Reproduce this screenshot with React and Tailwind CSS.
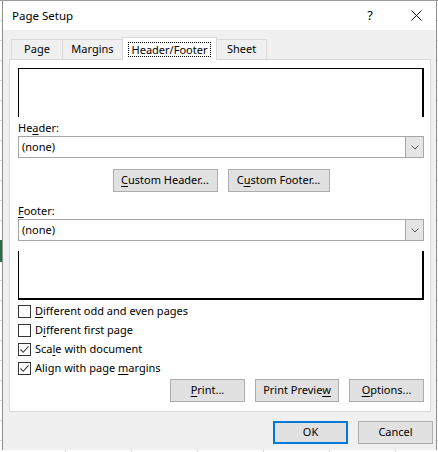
import React from 'react';

const Btn = ({ w, children, primary }) => (
  <div
    className={`h-[23px] flex items-center justify-center bg-[#e1e1e1] ${w} ${
      primary ? 'border-2 border-[#0078d7]' : 'border border-[#adadad]'
    }`}
  >
    {children}
  </div>
);

const U = ({ children }) => <span className="underline underline-offset-[2px] decoration-1">{children}</span>;

const Select = () => (
  <div className="h-[22px] flex border border-[#a6a6a6] bg-white">
    <div className="flex-1 flex items-center pl-[3px]">(none)</div>
    <div className="w-[18px] flex items-center justify-center bg-[#e5e5e5] border-l border-[#a6a6a6]">
      <svg width="8" height="5" viewBox="0 0 8 5" fill="none">
        <path d="M0.5 0.5 L4 4 L7.5 0.5" stroke="#555" strokeWidth="1" />
      </svg>
    </div>
  </div>
);

const Check = ({ checked, children }) => (
  <div className="h-[19px] flex items-center">
    <div className="w-[13px] h-[13px] border border-[#333] bg-white flex items-center justify-center">
      {checked && (
        <svg width="11" height="11" viewBox="0 0 11 11" fill="none">
          <path d="M1.5 5.5 L4.2 8.3 L9.5 2.3" stroke="#3c3c3c" strokeWidth="1.1" />
        </svg>
      )}
    </div>
    <div className="ml-[4px]">{children}</div>
  </div>
);

export default function App() {
  return (
    <div className="w-[438px] h-[452px] bg-white border-t border-[#9b9b9b] flex flex-col font-['Noto_Sans',sans-serif] text-[11px] text-black overflow-hidden">
      <div className="flex h-[449px]">
        {/* sheet behind the dialog */}
        <div className="w-[2px] flex flex-col bg-[repeating-linear-gradient(to_bottom,#ffffff_0px,#ffffff_19px,#d4d4d4_19px,#d4d4d4_20px)]">
          <div className="mt-[239px] h-[22px] bg-[#217346]" />
        </div>

        <div className="w-[435px] flex flex-col border-l border-r border-[#8f8f8f]">
          {/* title bar */}
          <div className="h-[29px] bg-white flex items-center">
            <div className="pl-[9px] text-[11.5px]">Page Setup</div>
            <div className="flex-1" />
            <div className="w-[52px] h-full flex items-center justify-center text-[13px]">?</div>
            <div className="w-[40px] h-full flex items-center justify-center">
              <svg width="11" height="11" viewBox="0 0 11 11" fill="none">
                <path d="M0.5 0.5 L10.5 10.5 M10.5 0.5 L0.5 10.5" stroke="#111" strokeWidth="1" />
              </svg>
            </div>
          </div>

          {/* body */}
          <div className="flex-1 bg-[#f0f0f0] px-[6px] flex flex-col">
            {/* tabs */}
            <div className="mt-[7px] h-[22px] flex items-end pl-[2px]">
              <div className="w-[51px] h-[20px] flex items-center justify-center border-t border-l border-[#d9d9d9]">Page</div>
              <div className="w-[60px] h-[20px] flex items-center justify-center border-t border-l border-[#d9d9d9]">Margins</div>
              <div className="relative z-10 -mb-px w-[95px] h-[23px] flex items-center justify-center bg-white border-t border-l border-r border-[#d9d9d9]">
                <span className="px-[3px] leading-[13px] outline-1 outline-dotted outline-black">Header/Footer</span>
              </div>
              <div className="w-[50px] h-[20px] flex items-center justify-center border-t border-r border-[#d9d9d9]">Sheet</div>
            </div>

            {/* panel */}
            <div className="w-[422px] h-[353px] bg-white border border-[#d9d9d9] pl-[8px] pr-[6px] flex flex-col">
              <div className="mt-[8px] h-[49px] border-t border-l border-r-2 border-black" />
              <div className="mt-[3px] h-[16px] leading-[16px]">
                He<U>a</U>der:
              </div>
              <Select />
              <div className="mt-[11px] flex justify-center gap-[10px]">
                <Btn w="w-[105px]">
                  <span><U>C</U>ustom Header...</span>
                </Btn>
                <Btn w="w-[102px]">
                  <span>C<U>u</U>stom Footer...</span>
                </Btn>
              </div>
              <div className="mt-[10px] h-[17px] leading-[17px]">
                <U>F</U>ooter:
              </div>
              <Select />
              <div className="mt-[10px] h-[49px] border-l border-r-2 border-b-2 border-black" />
              <div className="mt-[2px] flex flex-col">
                <Check>
                  <U>D</U>ifferent odd and even pages
                </Check>
                <Check>
                  D<U>i</U>fferent first page
                </Check>
                <Check checked>
                  Sca<U>l</U>e with document
                </Check>
                <Check checked>
                  Align with page <U>m</U>argins
                </Check>
              </div>
              <div className="mt-[1px] flex justify-end gap-[10px]">
                <Btn w="w-[75px]">
                  <span><U>P</U>rint...</span>
                </Btn>
                <Btn w="w-[84px]">
                  <span>Print Previe<U>w</U></span>
                </Btn>
                <Btn w="w-[75px]">
                  <span><U>O</U>ptions...</span>
                </Btn>
              </div>
            </div>

            {/* dialog buttons */}
            <div className="mt-[9px] flex justify-end gap-[10px] -mr-[3px]">
              <Btn w="w-[75px]" primary>OK</Btn>
              <Btn w="w-[75px]">Cancel</Btn>
            </div>
          </div>
        </div>

        <div className="w-[1px] bg-[repeating-linear-gradient(to_bottom,#ffffff_0px,#ffffff_19px,#d4d4d4_19px,#d4d4d4_20px)]" />
      </div>
      <div className="h-[2px] bg-[repeating-linear-gradient(to_right,#ffffff_0px,#ffffff_65px,#d4d4d4_65px,#d4d4d4_66px)]" />
    </div>
  );
}
